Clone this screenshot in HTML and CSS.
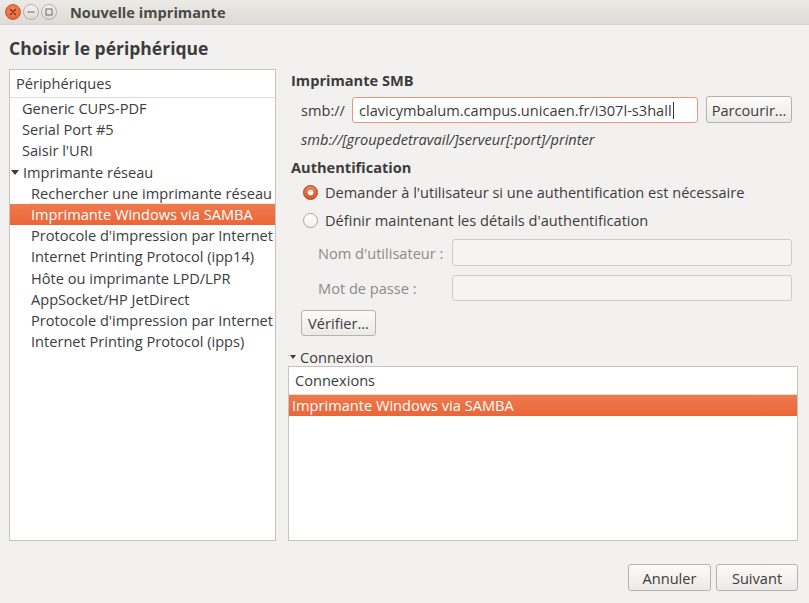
FILE: index.html
```html
<!DOCTYPE html>
<html lang="fr">
<head>
<meta charset="utf-8">
<title>Nouvelle imprimante</title>
<link rel="stylesheet" href="styles.css">
</head>
<body>
<div class="window">
  <div class="titlebar">
    <div class="wm-buttons">
      <span class="wm-btn wm-close"><svg width="8" height="8" viewBox="0 0 8 8"><path d="M1.5 1.5L6.5 6.5M6.5 1.5L1.5 6.5" stroke="#7a2a10" stroke-width="1.3" stroke-linecap="round"/></svg></span>
      <span class="wm-btn"><svg width="8" height="8" viewBox="0 0 8 8"><path d="M0.5 4H7.5" stroke="#6b6965" stroke-width="1"/></svg></span>
      <span class="wm-btn"><svg width="8" height="8" viewBox="0 0 8 8"><rect x="1" y="1" width="6" height="6" fill="none" stroke="#6b6965" stroke-width="1"/></svg></span>
    </div>
    <div class="title">Nouvelle imprimante</div>
  </div>
  <div class="content">
    <h1 class="page-title">Choisir le périphérique</h1>
    <div class="columns">
      <div class="tree devices">
        <div class="tree-header">Périphériques</div>
        <div class="row lvl1">Generic CUPS-PDF</div>
        <div class="row lvl1">Serial Port #5</div>
        <div class="row lvl1">Saisir l'URI</div>
        <div class="row lvl0"><span class="expander"></span>Imprimante réseau</div>
        <div class="row lvl2 focus-line">Rechercher une imprimante réseau</div>
        <div class="row lvl2 selected">Imprimante Windows via SAMBA</div>
        <div class="row lvl2">Protocole d'impression par Internet</div>
        <div class="row lvl2">Internet Printing Protocol (ipp14)</div>
        <div class="row lvl2">Hôte ou imprimante LPD/LPR</div>
        <div class="row lvl2">AppSocket/HP JetDirect</div>
        <div class="row lvl2">Protocole d'impression par Internet</div>
        <div class="row lvl2">Internet Printing Protocol (ipps)</div>
      </div>
      <div class="settings">
        <div class="section-title">Imprimante SMB</div>
        <div class="smb-row">
          <span class="smb-label">smb://</span>
          <div class="entry focused">clavicymbalum.campus.unicaen.fr/i307l-s3hall<span class="caret"></span></div>
          <button class="btn browse">Parcourir...</button>
        </div>
        <div class="hint">smb://[groupedetravail/]serveur[:port]/printer</div>
        <div class="section-title auth-title">Authentification</div>
        <label class="radio-row first"><span class="radio checked"></span>Demander à l'utilisateur si une authentification est nécessaire</label>
        <label class="radio-row"><span class="radio"></span>Définir maintenant les détails d'authentification</label>
        <div class="field-row user-row">
          <span class="field-label">Nom d'utilisateur :</span>
          <div class="entry disabled"></div>
        </div>
        <div class="field-row pass-row">
          <span class="field-label">Mot de passe :</span>
          <div class="entry disabled"></div>
        </div>
        <button class="btn verify">Vérifier...</button>
        <div class="expander-title"><span class="expander small"></span>Connexion</div>
        <div class="tree connections">
          <div class="tree-header">Connexions</div>
          <div class="row conn selected">Imprimante Windows via SAMBA</div>
        </div>
      </div>
    </div>
    <div class="footer">
      <button class="btn footer-btn">Annuler</button>
      <button class="btn footer-btn">Suivant</button>
    </div>
  </div>
</div>
</body>
</html>
```
FILE: styles.css
```css
* { box-sizing: border-box; }
html, body { margin: 0; padding: 0; }
body {
  width: 809px;
  height: 603px;
  overflow: hidden;
  background: #f2f1f0;
  font-family: "Open Sans", "DejaVu Sans", sans-serif;
  font-size: 14.6px;
  color: #3c3c3c;
}
.window { width: 809px; height: 603px; display: flex; flex-direction: column; }

.titlebar {
  height: 25px;
  display: flex;
  align-items: center;
  background: linear-gradient(#eceae6, #dedbd5);
  border-bottom: 1px solid #d6d3cd;
}
.wm-buttons { display: flex; gap: 2px; padding-left: 5px; }
.wm-btn {
  width: 16px; height: 16px; border-radius: 50%;
  display: flex; align-items: center; justify-content: center;
  background: linear-gradient(#f4f3f1, #dcdad5);
  border: 1px solid #b5b2ab;
}
.wm-close {
  background: radial-gradient(circle at 50% 40%, #f38a63, #e25d2d);
  border-color: #c9592e;
}
.title {
  margin-left: 13px;
  font-weight: 700;
  font-size: 14.6px;
  color: #4a4a48;
}

.content { flex: 1; display: flex; flex-direction: column; padding: 0 11px 12px 9px; }
.page-title {
  margin: 11px 0 0 0;
  font-size: 17.5px;
  line-height: 24px;
  font-weight: 700;
  color: #3c3c3c;
}
.columns { display: flex; gap: 12px; margin-top: 9px; height: 472px; }

.tree {
  background: #fff;
  border: 1px solid #c7c4bf;
  overflow: hidden;
}
.devices { width: 267px; }
.tree-header {
  height: 28px;
  line-height: 27px;
  padding-left: 6px;
  border-bottom: 1px solid #dedcd8;
  background: #fff;
  color: #3c3c3c;
}
.row {
  height: 21.2px;
  line-height: 21px;
  white-space: nowrap;
  overflow: hidden;
}
.lvl0 { padding-left: 1px; display: flex; align-items: center; }
.lvl1 { padding-left: 12px; }
.lvl2 { padding-left: 21px; }
.expander {
  width: 0; height: 0;
  border-left: 4px solid transparent;
  border-right: 4px solid transparent;
  border-top: 5px solid #3c3c3c;
  margin-right: 4px;
  display: inline-block;
}
.expander.small { border-left-width: 3px; border-right-width: 3px; border-top-width: 4px; margin-right: 4px; vertical-align: middle; position: relative; top: -2px; }
.focus-line { box-shadow: inset 0 -1px 0 #e6e4e0; margin-left: 19px; padding-left: 2px; }
.selected {
  background: linear-gradient(#ef7a4c, #e9663a);
  color: #fff;
}

.settings { flex: 1; display: flex; flex-direction: column; min-width: 0; }
.section-title {
  font-weight: 700;
  line-height: 20px;
  margin-left: 3px;
  margin-top: 1px;
}
.smb-row {
  display: flex;
  align-items: center;
  margin-top: 6px;
  margin-left: 13px;
  height: 27px;
}
.smb-label { width: 51px; }
.entry {
  height: 26px;
  border: 1px solid #bcb9b3;
  border-radius: 3px;
  background: #fff;
  padding-left: 6px;
  line-height: 24px;
  white-space: nowrap;
}
.entry.focused { width: 346px; border-color: #e59a7b; }
.caret { display: inline-block; width: 1px; height: 17px; background: #333; vertical-align: middle; margin-left: 1px; position: relative; top: -1px; }
.btn {
  font-family: inherit;
  font-size: 14.6px;
  color: #3c3c3c;
  background: linear-gradient(#fbfbfa, #eceae7);
  border: 1px solid #b6b3ad;
  border-radius: 3px;
  padding: 0;
  height: 27px;
}
.browse { width: 86px; margin-left: 8px; }
.hint { font-style: italic; margin-left: 13px; margin-top: 6px; line-height: 20px; }
.auth-title { margin-top: 8px; }
.radio-row { display: flex; align-items: center; margin-left: 15px; height: 20px; }
.radio-row.first { margin-top: 5px; }
.radio-row + .radio-row { margin-top: 8px; }
.radio {
  width: 15px; height: 15px; border-radius: 50%;
  border: 1px solid #a9a6a0;
  background: linear-gradient(#fff, #f1f0ee);
  margin-right: 7px;
  flex: none;
}
.radio.checked {
  border-color: #a5441d;
  background: radial-gradient(circle, #fff 0 2.6px, transparent 3.2px), linear-gradient(#f08050, #d8562a);
}
.field-row { display: flex; align-items: center; margin-left: 30px; }
.user-row { margin-top: 9px; }
.pass-row { margin-top: 9px; }
.field-label { width: 134px; color: #8d8b87; }
.entry.disabled { flex: 1; height: 27px; background: #f5f4f2; border-color: #cfccc7; margin-right: 6px; }
.pass-row .entry.disabled { height: 26px; }
.verify { width: 75px; height: 26px; margin-left: 13px; margin-top: 9px; }
.expander-title { margin-top: 11px; line-height: 20px; margin-left: 2px; }
.connections { flex: 1; margin-top: -1px; }
.conn { padding-left: 3px; }

.footer { display: flex; justify-content: flex-end; gap: 5px; margin-top: auto; }
.footer-btn { width: 83px; height: 27px; }
.footer-btn + .footer-btn { width: 82px; }
```
